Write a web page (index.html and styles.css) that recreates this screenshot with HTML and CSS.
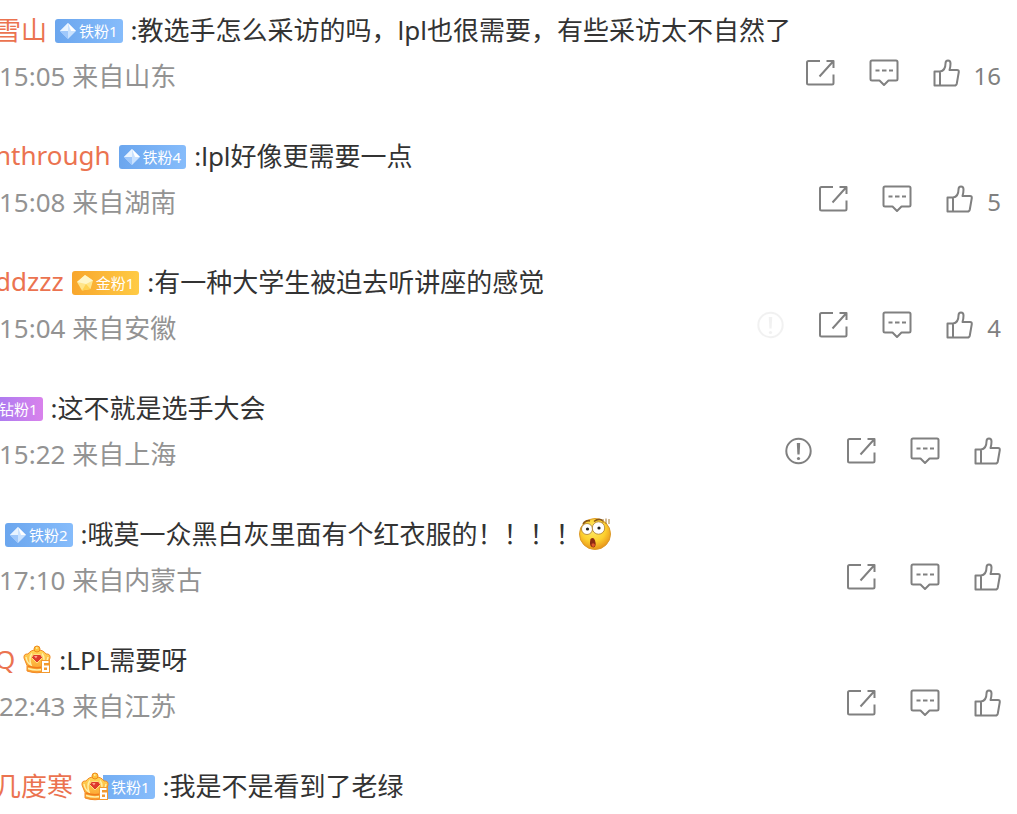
FILE: index.html
```
<!DOCTYPE html>
<html lang="zh-CN">
<head>
  <meta charset="UTF-8">
  <title>评论</title>
  <link rel="stylesheet" href="styles.css">
</head>
<body>
  <!-- shared shapes -->
  <svg class="defs" aria-hidden="true">
    <defs>
      <linearGradient id="gold" x1="0" y1="0" x2="0" y2="1">
        <stop offset="0" stop-color="#ffd95a"/>
        <stop offset="1" stop-color="#fb9a2a"/>
      </linearGradient>
      <radialGradient id="skin" cx="0.45" cy="0.35" r="0.65">
        <stop offset="0" stop-color="#ffec6a"/>
        <stop offset="0.6" stop-color="#fdd02f"/>
        <stop offset="1" stop-color="#e8941a"/>
      </radialGradient>
    </defs>
    <symbol id="share" viewBox="0 0 30 28">
      <path d="M15 2H3.500Q2 2 2 3.500V24Q2 25.500 3.500 25.500H27Q28.500 25.500 28.500 24V15.500M14.500 17.500L28 2.500M21.500 2H28.500V9"/>
    </symbol>
    <symbol id="comment" viewBox="0 0 30 28">
      <path d="M3 1.500H27Q28.500 1.500 28.500 3V20Q28.500 21.500 27 21.500H19.500L15 26L10.500 21.500H3Q1.500 21.500 1.500 20V3Q1.500 1.500 3 1.500Z"/>
      <path d="M6.500 11.500H10.500M13 11.500H17.500M20 11.500H24"/>
    </symbol>
    <symbol id="like" viewBox="0 0 27 28">
      <path d="M1.500 12.500H7V26.500H1.500ZM7 12.500C11 12 12.500 8.500 12.500 4.500C12.500 0.500 17.500 0.500 17.500 4.500C17.500 7.500 17 9.500 16.500 11H24Q26 11 25.800 13L23.800 24.500Q23.400 26.500 21.500 26.500H7"/>
    </symbol>
    <symbol id="alert" viewBox="0 0 27 28">
      <circle cx="13.500" cy="14" r="12.200"/>
      <path d="M11.800 6H15.200L14.600 17.500H12.400Z" fill="currentColor" stroke="none"/>
      <circle cx="13.500" cy="21.500" r="1.600" fill="currentColor" stroke="none"/>
    </symbol>
    <symbol id="gem" viewBox="0 0 18 18">
      <path d="M9 1L17 9L9 17L1 9Z" fill="#c9e2ff"/>
      <path d="M9 1L1 9L9 9Z" fill="#e9f4ff"/>
      <path d="M9 1L17 9L12 9Z" fill="#fff"/>
      <path d="M1 9H9V17Z" fill="#9fc8fb"/>
    </symbol>
    <symbol id="gem-gold" viewBox="0 0 18 18">
      <path d="M9 1L17 6.500L14.500 15L6 16.500L1 8Z" fill="#ffe58a"/>
      <path d="M9 1L17 6.500L10 10L1 8Z" fill="#fff6c8"/>
      <path d="M10 10L14.500 15L6 16.500Z" fill="#ffd252"/>
    </symbol>
    <symbol id="crown" viewBox="0 0 28 30">
      <path d="M4 20.500L1 13Q0.500 8.500 5 9Q8 4.500 14 5Q20 4.500 23 9Q27.500 8.500 27 13L24 20.500V26Q14 29.500 4 26Z" fill="url(#gold)" stroke="#f28a24"/>
      <circle cx="14" cy="4" r="3" fill="#ffc23c" stroke="#ee8b1c"/>
      <path d="M13 3H14.500" stroke="#fff3b0" stroke-width="1.500"/>
      <path d="M3 12Q4 18 8 20Q5.500 13 9 8.500M25 12Q24 18 20 20Q22.500 13 19 8.500M5 23.500Q14 26.500 23 23.500" stroke="#fff0a6" stroke-width="1.500" fill="none"/>
      <path d="M5 21Q14 24.500 23 21" stroke="#f07c1c" stroke-width="1.500" fill="none"/>
      <path d="M10.500 9.500H17.500L19.500 12.500L14 18L8.500 12.500Z" fill="#dd3a2c" stroke="#ffdf80"/>
      <path d="M11 11H14.500L13 13.500Z" fill="#ffa28f"/>
      <path d="M18 15H27V28H18Z" fill="#f29a30"/>
      <path d="M25.500 17H20V26H25V21.500H20" fill="none" stroke="#fff" stroke-width="2"/>
    </symbol>
    <symbol id="shock" viewBox="0 0 34 34">
      <circle cx="17" cy="18" r="15.500" fill="url(#skin)" stroke="#dc9a2a"/>
      <path d="M5 8Q8 3.500 12 5M16 5.500Q21 1.500 25 5" fill="none" stroke="#8a5617" stroke-width="1.500"/>
      <path d="M25 3V7M28 2.500V8M31 3V8" stroke="#a87a30" stroke-width="1"/>
      <circle cx="9" cy="13" r="5.500" fill="#fff" stroke="#a97828" stroke-width="0.800"/>
      <circle cx="20.500" cy="12" r="6.200" fill="#fff" stroke="#a97828" stroke-width="0.800"/>
      <circle cx="9.500" cy="13" r="1.600" fill="#222"/>
      <circle cx="21" cy="12" r="1.600" fill="#222"/>
      <path d="M12.500 23Q15.500 20.500 17 24.500Q19 30.500 15.500 31.500Q11.500 31 12 26Z" fill="#8c2a12"/>
      <path d="M13.500 28Q16 26 17 29Q16.500 31 15 31Q13.500 30.500 13.500 28Z" fill="#e2572b"/>
    </symbol>
  </svg>

  <main class="list">
    <article class="item">
      <div class="text">
        <a href="#" class="name">雪山</a>
        <span class="badge iron"><svg class="gem"><use href="#gem"/></svg>铁粉1</span>
        <span>:教选手怎么采访的吗，lpl也很需要，有些采访太不自然了</span>
      </div>
      <div class="info">
        <span class="from">15:05 来自山东</span>
        <div class="actions">
          <button type="button" aria-label="转发"><svg class="icon"><use href="#share"/></svg></button>
          <button type="button" aria-label="评论"><svg class="icon"><use href="#comment"/></svg></button>
          <button type="button" aria-label="赞"><svg class="icon thumb"><use href="#like"/></svg><span class="count">16</span></button>
        </div>
      </div>
    </article>

    <article class="item">
      <div class="text">
        <a href="#" class="name">nthrough</a>
        <span class="badge iron"><svg class="gem"><use href="#gem"/></svg>铁粉4</span>
        <span>:lpl好像更需要一点</span>
      </div>
      <div class="info">
        <span class="from">15:08 来自湖南</span>
        <div class="actions">
          <button type="button" aria-label="转发"><svg class="icon"><use href="#share"/></svg></button>
          <button type="button" aria-label="评论"><svg class="icon"><use href="#comment"/></svg></button>
          <button type="button" aria-label="赞"><svg class="icon thumb"><use href="#like"/></svg><span class="count">5</span></button>
        </div>
      </div>
    </article>

    <article class="item">
      <div class="text">
        <a href="#" class="name">ddzzz</a>
        <span class="badge gold"><svg class="gem"><use href="#gem-gold"/></svg>金粉1</span>
        <span>:有一种大学生被迫去听讲座的感觉</span>
      </div>
      <div class="info">
        <span class="from">15:04 来自安徽</span>
        <div class="actions">
          <button type="button" class="faded" aria-label="举报"><svg class="icon thumb"><use href="#alert"/></svg></button>
          <button type="button" aria-label="转发"><svg class="icon"><use href="#share"/></svg></button>
          <button type="button" aria-label="评论"><svg class="icon"><use href="#comment"/></svg></button>
          <button type="button" aria-label="赞"><svg class="icon thumb"><use href="#like"/></svg><span class="count">4</span></button>
        </div>
      </div>
    </article>

    <article class="item">
      <div class="text">
        <span class="badge diamond">钻粉1</span>
        <span>:这不就是选手大会</span>
      </div>
      <div class="info">
        <span class="from">15:22 来自上海</span>
        <div class="actions">
          <button type="button" aria-label="举报"><svg class="icon thumb"><use href="#alert"/></svg></button>
          <button type="button" aria-label="转发"><svg class="icon"><use href="#share"/></svg></button>
          <button type="button" aria-label="评论"><svg class="icon"><use href="#comment"/></svg></button>
          <button type="button" aria-label="赞"><svg class="icon thumb"><use href="#like"/></svg></button>
        </div>
      </div>
    </article>

    <article class="item">
      <div class="text">
        <span class="badge iron first"><svg class="gem"><use href="#gem"/></svg>铁粉2</span>
        <span>:哦莫一众黑白灰里面有个红衣服的！！！！</span>
        <svg class="emoji" role="img" aria-label="吃惊"><use href="#shock"/></svg>
      </div>
      <div class="info">
        <span class="from">17:10 来自内蒙古</span>
        <div class="actions">
          <button type="button" aria-label="转发"><svg class="icon"><use href="#share"/></svg></button>
          <button type="button" aria-label="评论"><svg class="icon"><use href="#comment"/></svg></button>
          <button type="button" aria-label="赞"><svg class="icon thumb"><use href="#like"/></svg></button>
        </div>
      </div>
    </article>

    <article class="item">
      <div class="text">
        <a href="#" class="name">Q</a>
        <svg class="crown"><use href="#crown"/></svg>
        <span>:LPL需要呀</span>
      </div>
      <div class="info">
        <span class="from">22:43 来自江苏</span>
        <div class="actions">
          <button type="button" aria-label="转发"><svg class="icon"><use href="#share"/></svg></button>
          <button type="button" aria-label="评论"><svg class="icon"><use href="#comment"/></svg></button>
          <button type="button" aria-label="赞"><svg class="icon thumb"><use href="#like"/></svg></button>
        </div>
      </div>
    </article>

    <article class="item">
      <div class="text">
        <a href="#" class="name">几度寒</a>
        <span class="badge iron crowned"><svg class="crown"><use href="#crown"/></svg>铁粉1</span>
        <span>:我是不是看到了老绿</span>
      </div>
    </article>
  </main>
</body>
</html>
```
FILE: styles.css
```
body {
  margin: 0;
  background: #fff;
  color: #333;
  font-family: "Noto Sans", "Noto Sans CJK SC", sans-serif;
  font-size: 26px;
  overflow-x: hidden;
}
.defs {
  display: block;
  width: 0;
  height: 0;
}
.list {
  display: flex;
  flex-direction: column;
  gap: 34px;
  margin-left: -5px;
  padding: 6px 16px 0 0;
}
.text,
.info {
  display: flex;
  align-items: center;
  height: 46px;
  white-space: nowrap;
}
.text {
  gap: 8px;
}
.name {
  color: #eb7350;
  text-decoration: none;
}
.info {
  justify-content: space-between;
  padding-left: 4px;
  color: #939393;
}
.badge {
  display: flex;
  align-items: center;
  gap: 2px;
  box-sizing: border-box;
  height: 24px;
  margin-top: 4px;
  padding: 0 5px 0 4px;
  border-radius: 3px;
  color: #fff;
  font-size: 15px;
  line-height: 24px;
}
.iron {
  background: linear-gradient(90deg, #6ba6ee, #86bcfb);
}
.gold {
  background: linear-gradient(90deg, #f8a62c, #ffcb45);
}
.diamond {
  background: linear-gradient(90deg, #a97bf0, #d982ec);
}
.first {
  margin-left: 10px;
}
.gem {
  width: 18px;
  height: 18px;
}
.crown {
  width: 28px;
  height: 30px;
  margin-top: 2px;
}
/* the crown hangs over the left end of the badge */
.crowned {
  padding-left: 0;
  background: linear-gradient(90deg, transparent 22px, #74aef3 22px, #86bcfb);
}
.crowned .crown {
  margin-top: 0;
}
.emoji {
  width: 34px;
  height: 34px;
  margin-left: -12px;
}
.actions {
  display: flex;
  align-items: center;
  gap: 34px;
}
.actions button {
  display: flex;
  align-items: center;
  gap: 14px;
  padding: 0;
  border: 0;
  background: none;
  color: #808080;
  font: inherit;
  font-size: 24px;
  line-height: 36px;
  cursor: pointer;
}
.icon {
  width: 30px;
  height: 28px;
  margin-bottom: 4px;
  fill: none;
  stroke: currentColor;
  stroke-width: 2;
  stroke-linejoin: round;
}
.count {
  padding-top: 2px;
}
.thumb {
  width: 27px;
}
.actions .faded {
  opacity: 0.1;
}
```
